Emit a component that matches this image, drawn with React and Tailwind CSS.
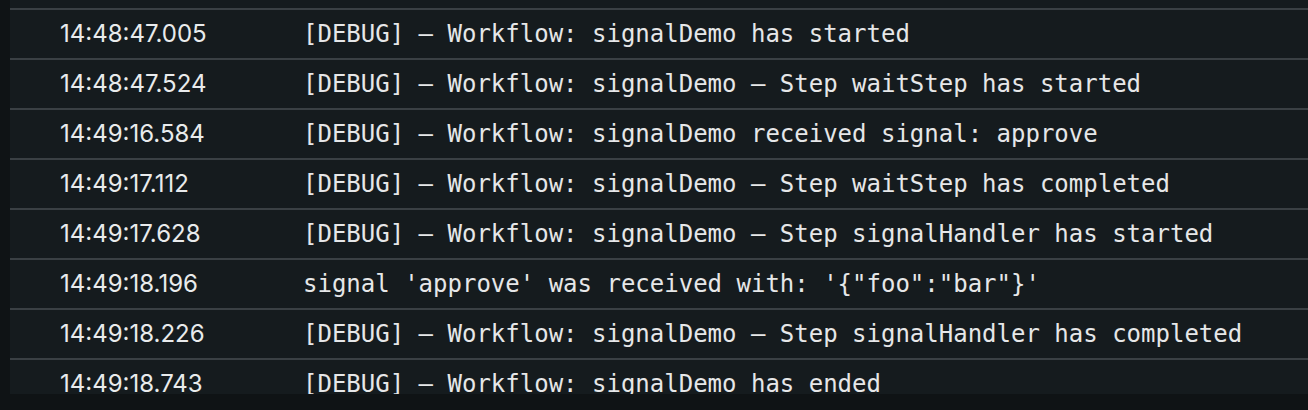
import React from "react";

const logs = [
  { time: "14:48:47.005", msg: "[DEBUG] – Workflow: signalDemo has started" },
  { time: "14:48:47.524", msg: "[DEBUG] – Workflow: signalDemo – Step waitStep has started" },
  { time: "14:49:16.584", msg: "[DEBUG] – Workflow: signalDemo received signal: approve" },
  { time: "14:49:17.112", msg: "[DEBUG] – Workflow: signalDemo – Step waitStep has completed" },
  { time: "14:49:17.628", msg: "[DEBUG] – Workflow: signalDemo – Step signalHandler has started" },
  { time: "14:49:18.196", msg: "signal 'approve' was received with: '{\"foo\":\"bar\"}'" },
  { time: "14:49:18.226", msg: "[DEBUG] – Workflow: signalDemo – Step signalHandler has completed" },
  { time: "14:49:18.743", msg: "[DEBUG] – Workflow: signalDemo has ended" },
];

// one log line: timestamp column + monospace message
function LogRow({ time, msg }) {
  return (
    <div className="flex items-center h-[50px] shrink-0 border-t-2 border-[#3a4044]">
      <div className="w-[293px] shrink-0 pl-[50px] text-[24px] text-[#e9ebec] font-['Inter',sans-serif]">
        {time}
      </div>
      <div className="whitespace-pre text-[24px] text-[#e6e7e8] font-['DejaVu_Sans_Mono',monospace]">
        {msg}
      </div>
    </div>
  );
}

export default function App() {
  return (
    <div className="w-[1308px] h-[410px] bg-[#0f1315] flex flex-col">
      <div className="ml-[10px] h-[394px] overflow-hidden bg-[#151b1e] pt-[8px] flex flex-col">
        {logs.map((l) => (
          <LogRow key={l.time} time={l.time} msg={l.msg} />
        ))}
      </div>
    </div>
  );
}
